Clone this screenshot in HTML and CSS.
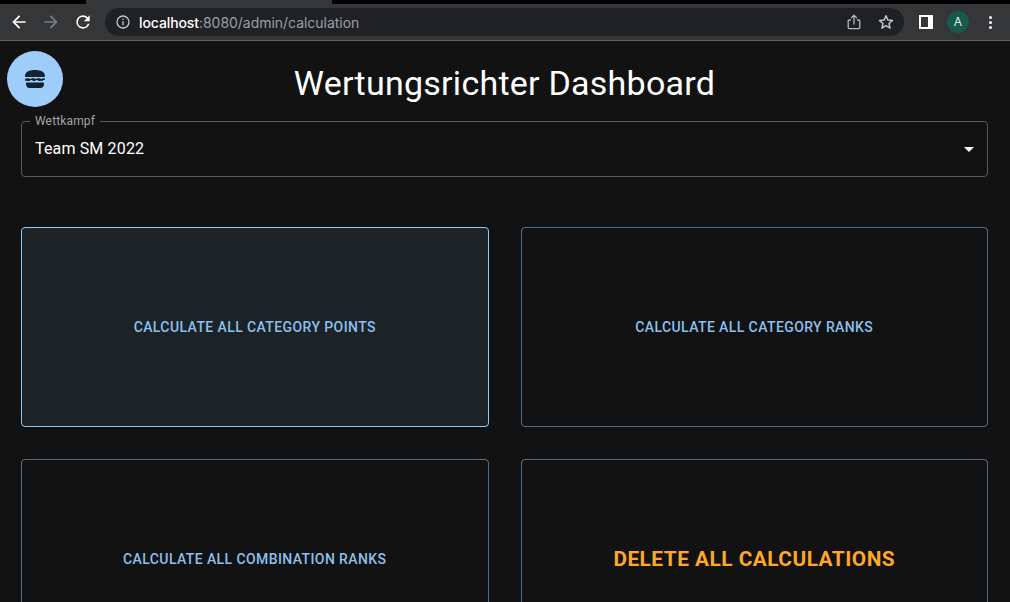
FILE: index.html
```html
<!DOCTYPE html>
<html lang="de">
<head>
<meta charset="utf-8">
<title>Wertungsrichter Dashboard</title>
<link rel="stylesheet" href="styles.css">
</head>
<body>
<header class="chrome">
  <div class="tabstrip"><div class="tab"></div></div>
  <div class="toolbar">
    <svg class="nav" viewBox="0 0 24 24"><path fill="#fff" d="M20 11H7.83l5.59-5.59L12 4l-8 8 8 8 1.41-1.41L7.83 13H20z"/></svg>
    <svg class="nav" viewBox="0 0 24 24"><path fill="#7d7e80" d="M4 11h12.17l-5.59-5.59L12 4l8 8-8 8-1.41-1.41L16.17 13H4z"/></svg>
    <svg class="nav" viewBox="0 0 24 24"><path fill="#fff" d="M17.65 6.35A7.96 7.96 0 0 0 12 4a8 8 0 1 0 7.74 10h-2.08A6 6 0 1 1 12 6c1.66 0 3.14.69 4.22 1.78L13 11h7V4z"/></svg>
    <div class="omnibox">
      <svg class="info" viewBox="0 0 24 24"><path fill="#c4c7c5" d="M11 7h2v2h-2zm0 4h2v6h-2zm1-9a10 10 0 1 0 0 20 10 10 0 0 0 0-20zm0 18a8 8 0 1 1 0-16 8 8 0 0 1 0 16z"/></svg>
      <span class="url"><span class="host">localhost</span>:8080/admin/calculation</span>
      <svg class="omni-share" viewBox="0 0 16 16"><path fill="none" stroke="#b6b8ba" stroke-width="1.3" stroke-linejoin="round" d="M5 6H3.2a1 1 0 0 0-1 1v6.6a1 1 0 0 0 1 1h9.6a1 1 0 0 0 1-1V7a1 1 0 0 0-1-1H11M8 10.5V1.4M5.2 4 8 1.2 10.8 4"/></svg>
      <svg class="omni-star" viewBox="0 0 24 24"><path fill="none" stroke="#c4c7c5" stroke-width="2" stroke-linejoin="round" d="M12 3.6l2.5 5.7 6.2.6-4.7 4.1 1.4 6.1-5.4-3.2-5.4 3.2 1.4-6.1-4.7-4.1 6.2-.6z"/></svg>
    </div>
    <div class="panel-icon"><span></span></div>
    <div class="avatar">A</div>
    <div class="kebab"><i></i><i></i><i></i></div>
  </div>
</header>

<button class="fab" aria-label="Menü">
  <svg viewBox="0 0 24 24"><path fill="#132230" d="M22 13c0-.81-.41-1.41-1.02-1.66-.55-.23-1.17-.12-1.68.25-.34.25-.72.41-1.1.41-.37 0-.74-.15-1.1-.41a2.66 2.66 0 0 0-3.2 0c-.36.26-.73.41-1.1.41-.37 0-.74-.15-1.1-.41a2.66 2.66 0 0 0-3.2 0c-.36.26-.73.41-1.1.41-.38 0-.76-.16-1.1-.41-.51-.37-1.13-.48-1.68-.25C2.41 11.59 2 12.19 2 13c0 .5.4.9.9.9.36 0 .66-.2.8-.5.84.62 2.2 1.1 3.6.1.36-.26.73-.41 1.1-.41.37 0 .74.15 1.1.41 1 .72 2.2.72 3.2 0 .36-.26.73-.41 1.1-.41.37 0 .74.15 1.1.41 1.4 1 2.76.52 3.6-.1.14.3.44.5.8.5.5 0 .9-.4.9-.9z"/><path fill="#132230" d="M22 9c.03-3.99-4.22-6-10-6S2.03 5.01 2 9c0 .55.45 1 1 1h18c.55 0 1-.45 1-1zM3 16.5v1c0 1.93 1.57 3.5 3.5 3.5h11c1.93 0 3.5-1.57 3.5-3.5v-1c0-.55-.45-1-1-1H4c-.55 0-1 .45-1 1z"/></svg>
</button>

<main class="page">
  <h1 class="title">Wertungsrichter Dashboard</h1>
  <div class="select">
    <span class="select-label">Wettkampf</span>
    <span class="select-value">Team SM 2022</span>
    <svg class="caret" viewBox="0 0 24 24"><path fill="#fff" d="M7 10l5 5 5-5z"/></svg>
  </div>
  <section class="actions">
    <button class="action is-hover">Calculate all category points</button>
    <button class="action">Calculate all category ranks</button>
    <button class="action">Calculate all combination ranks</button>
    <button class="action action-danger">Delete all calculations</button>
  </section>
</main>
</body>
</html>
```
FILE: styles.css
```css
* { box-sizing: border-box; }
body {
  margin: 0;
  height: 602px;
  overflow: hidden;
  background: #121212;
  color: #fff;
  font-family: Roboto, "Liberation Sans", sans-serif;
  position: relative;
}
.chrome { height: 41px; background: #353638; border-bottom: 1px solid #5f6062; }
.tabstrip { height: 4px; background: #000; padding-left: 86px; }
.tab { width: 246px; height: 4px; background: #353638; }
.toolbar { height: 36px; display: flex; align-items: center; padding-left: 9px; }
.nav { width: 20px; height: 20px; flex: none; margin-right: 12px; }
.omnibox {
  flex: none;
  width: 799px;
  height: 28px;
  background: #202124;
  border-radius: 14px;
  display: flex;
  align-items: center;
  padding-left: 10px;
}
.info { width: 16px; height: 16px; flex: none; }
.url { margin-left: 8px; font: 14px Inter, Roboto, sans-serif; letter-spacing: -.03px; color: #9aa0a6; flex: 1; }
.host { color: #fff; font-weight: 500; letter-spacing: -.1px; }
.omni-share { width: 16px; height: 16px; flex: none; margin-right: 15px; }
.omni-star { width: 18px; height: 18px; flex: none; margin-right: 9px; }
.panel-icon { width: 14px; height: 14px; background: #fff; margin-left: 15px; padding: 2px; flex: none; }
.panel-icon span { display: block; width: 7px; height: 10px; background: #353638; }
.avatar {
  width: 22px; height: 22px; margin-left: 14px; border-radius: 50%;
  background: #17594a; color: #dfeee9; font: 12px/22px Inter, Roboto, sans-serif; text-align: center; flex: none;
}
.kebab { margin-left: 20px; display: flex; flex-direction: column; gap: 2px; flex: none; }
.kebab i { display: block; width: 3px; height: 3px; border-radius: 50%; background: #fff; }
.fab {
  position: absolute; left: 7px; top: 51px; width: 56px; height: 56px;
  border: 0; border-radius: 50%; background: #9fcdfb; padding: 0;
  display: flex; align-items: center; justify-content: center;
}
.fab svg { width: 24px; height: 24px; }
.page { padding: 0 22px 0 21px; }
.title { margin: 0; padding-top: 21px; height: 80px; font-size: 34px; line-height: 42px; font-weight: 400; text-align: center; letter-spacing: .25px; }
.select {
  height: 56px; padding: 0 6px 0 13px;
  border: 1px solid #5a5a5a; border-radius: 4px; display: flex; align-items: center; position: relative;
}
.select-label {
  position: absolute; left: 8px; top: -7px; padding: 0 5px; background: #121212;
  font-size: 12px; line-height: 12px; color: #a5a5a5; letter-spacing: .15px;
}
.select-value { font-size: 16px; letter-spacing: .15px; flex: 1; padding-bottom: 2px; }
.caret { width: 24px; height: 24px; }
.actions { display: grid; grid-template-columns: 1fr 1fr; gap: 32px; margin-top: 50px; }
.action {
  height: 200px; background: transparent; border: 1px solid rgba(144,202,249,.5); border-radius: 4px;
  color: #8cc0ee; font: 500 14px/1.75 Roboto, sans-serif; letter-spacing: .4px; text-transform: uppercase;
}
.action.is-hover { background: #1c2226; border-color: #90caf9; }
.action-danger { color: #ffa726; font-size: 20.8px; font-weight: 700; letter-spacing: .5px; }
```
